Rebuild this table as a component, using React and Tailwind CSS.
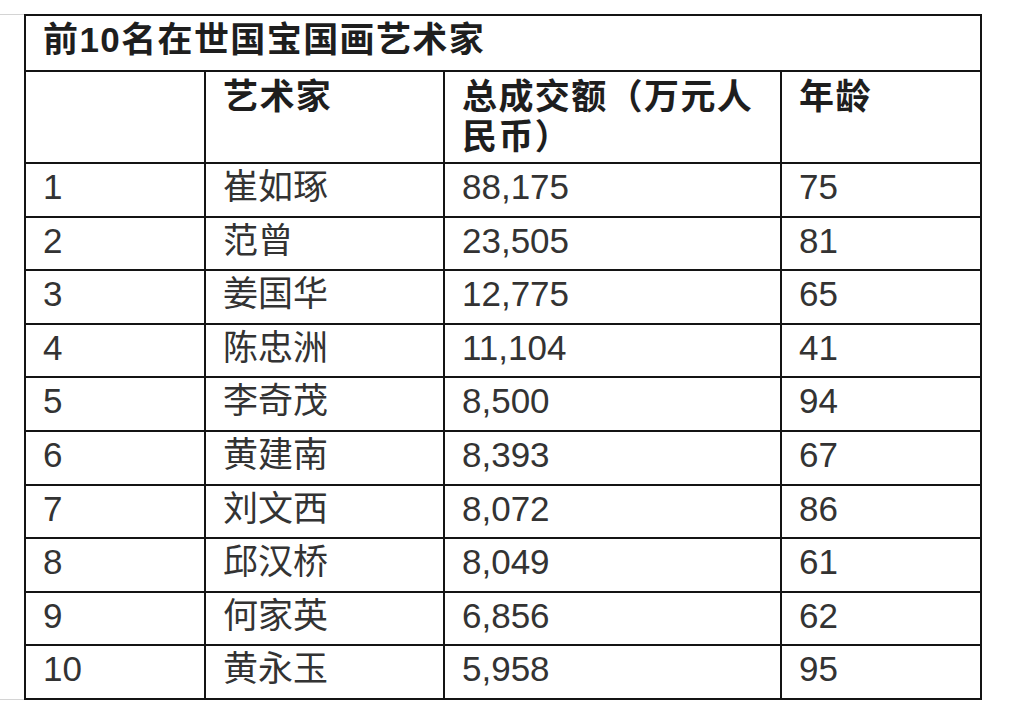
const rows = [
  ["1", "崔如琢", "88,175", "75"],
  ["2", "范曾", "23,505", "81"],
  ["3", "姜国华", "12,775", "65"],
  ["4", "陈忠洲", "11,104", "41"],
  ["5", "李奇茂", "8,500", "94"],
  ["6", "黄建南", "8,393", "67"],
  ["7", "刘文西", "8,072", "86"],
  ["8", "邱汉桥", "8,049", "61"],
  ["9", "何家英", "6,856", "62"],
  ["10", "黄永玉", "5,958", "95"],
]

const cell = "border-r-2 border-b-2 border-[#141414] pl-[17px] pr-[14px]"
const head = "font-bold text-[#1e1e1e] tracking-[1.4px]"

export default function App() {
  return (
    <div
      className="min-h-[723px] w-[1009px] bg-white pt-[14px] text-[35px] leading-[40px]"
      style={{ fontFamily: '"Liberation Sans", "Noto Sans CJK SC", sans-serif' }}
    >
      <div className="flex">
        <div className="w-[24px] border-t border-b border-[#d4d4d4]" />
        <div className="grid w-[958px] grid-cols-[180px_239px_337px_200px] border-t-2 border-l-2 border-[#141414]">
          <div className={`${cell} ${head} col-span-4 h-[56px] pt-[4px]`}>
            前10名在世国宝国画艺术家
          </div>
          <div className={`${cell} h-[92px]`}></div>
          <div className={`${cell} ${head} pt-[5px]`}>艺术家</div>
          <div className={`${cell} ${head} pt-[5px]`}>总成交额（万元人民币）</div>
          <div className={`${cell} ${head} pt-[5px]`}>年龄</div>
          {rows.map((r) =>
            r.map((v, i) => (
              <div key={r[0] + "-" + i} className={`${cell} h-[53.6px] pt-[3px] text-[#333333]`}>
                {v}
              </div>
            ))
          )}
        </div>
      </div>
    </div>
  )
}
